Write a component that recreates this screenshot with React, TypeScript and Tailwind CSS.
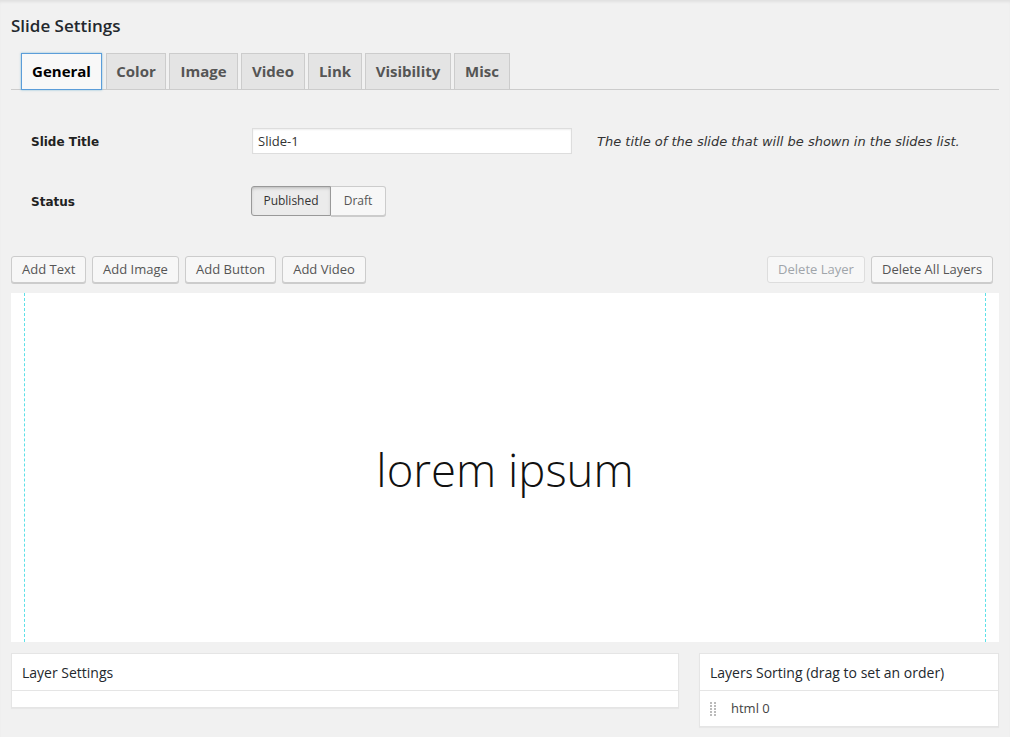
import React from "react";

const tabs = [
  { label: "General", w: "w-[81px]", active: true },
  { label: "Color", w: "w-[60px]" },
  { label: "Image", w: "w-[69px]" },
  { label: "Video", w: "w-[64px]" },
  { label: "Link", w: "w-[54px]" },
  { label: "Visibility", w: "w-[86px]" },
  { label: "Misc", w: "w-[56px]" },
];

function WpButton({ children, disabled, className = "" }: { children: React.ReactNode; disabled?: boolean; className?: string }) {
  return (
    <button
      className={
        "h-[27px] px-[10px] rounded-[3px] border text-[13px] leading-[25px] whitespace-nowrap " +
        (disabled
          ? "border-[#ddd] bg-[#f7f7f7] text-[#a0a5aa] shadow-none "
          : "border-[#ccc] bg-[#f7f7f7] text-[#555] shadow-[0_1px_0_#ccc] ") +
        className
      }
    >
      {children}
    </button>
  );
}

function Handle() {
  return (
    <svg width="6" height="14" viewBox="0 0 6 14" className="shrink-0">
      {[0, 1, 2, 3, 4].map((r) =>
        [0, 1].map((c) => (
          <rect key={r + "-" + c} x={c * 4} y={r * 3} width="2" height="2" fill="#bbb" />
        ))
      )}
    </svg>
  );
}

export default function App() {
  return (
    <div
      className="w-[1010px] h-[737px] overflow-hidden bg-[#f1f1f1] text-[#444] shadow-[inset_0_3px_3px_-1px_rgba(0,0,0,0.07)]"
      style={{ fontFamily: '"Open Sans", sans-serif' }}
    >
      <div className="px-[11px]">
        <h2 className="pt-[14px] text-[17px] leading-[23px] font-semibold text-[#23282d]">Slide Settings</h2>

        {/* Tabs */}
        <div className="mt-[15px] flex gap-[3px] pl-[10px] pt-px border-b border-[#ccc] w-[988px]">
          {tabs.map((t) => (
            <div
              key={t.label}
              className={
                "h-[37px] -mb-px flex items-center justify-center text-[15px] font-bold border " +
                t.w +
                " " +
                (t.active
                  ? "bg-[#f8f8f8] border-[#5b9dd9] text-black shadow-[0_0_2px_rgba(30,140,190,0.5)] mr-px"
                  : "bg-[#e4e4e4] border-[#ccc] text-[#555]")
              }
            >
              <span>{t.label}</span>
            </div>
          ))}
        </div>

        {/* Form */}
        <div className="mt-[38px] flex items-center h-[26px]">
          <div className="w-[241px] pl-[20px] font-bold text-[#222]" style={{ fontFamily: '"DejaVu Sans", sans-serif', fontSize: "12px" }}>
            <span className="relative top-px">Slide Title</span>
          </div>
          <div className="w-[320px] h-[26px] bg-white border border-[#ddd] shadow-[inset_0_1px_2px_rgba(0,0,0,0.07)] px-[5px] text-[13px] leading-[24px] text-[#333]">
            Slide-1
          </div>
          <div className="ml-[25px] italic text-[#333]" style={{ fontFamily: '"DejaVu Sans", sans-serif', fontSize: "13px" }}>
            <span className="relative top-px">The title of the slide that will be shown in the slides list.</span>
          </div>
        </div>

        <div className="mt-[32px] flex items-center h-[30px]">
          <div className="w-[240px] pl-[20px] font-bold text-[#222]" style={{ fontFamily: '"DejaVu Sans", sans-serif', fontSize: "12px" }}>
            <span className="relative top-px">Status</span>
          </div>
          <div className="flex h-[30px] text-[12px]">
            <div className="w-[80px] flex items-center justify-center bg-[#ebebeb] border border-[#999] rounded-l-[3px] shadow-[inset_0_2px_5px_-3px_rgba(0,0,0,0.5)] text-[#333]">
              Published
            </div>
            <div className="w-[55px] flex items-center justify-center bg-[#f7f7f7] border border-l-0 border-[#ccc] rounded-r-[3px] shadow-[0_1px_0_#ccc] text-[#555]">
              Draft
            </div>
          </div>
        </div>

        {/* Layer buttons */}
        <div className="mt-[40px] flex items-center">
          <div className="flex gap-[6px]">
            <WpButton className="w-[75px]">Add Text</WpButton>
            <WpButton className="w-[87px]">Add Image</WpButton>
            <WpButton className="w-[91px]">Add Button</WpButton>
            <WpButton className="w-[84px]">Add Video</WpButton>
          </div>
          <div className="ml-auto mr-[6px] flex gap-[6px]">
            <WpButton disabled className="w-[98px]">Delete Layer</WpButton>
            <WpButton className="w-[122px]">Delete All Layers</WpButton>
          </div>
        </div>

        {/* Canvas */}
        <div className="mt-[10px] w-[988px] h-[349px] bg-white flex relative">
          <div className="absolute left-[13px] top-0 bottom-0 border-l border-dashed border-[#5ee1e8]" />
          <div className="absolute right-[13px] top-0 bottom-0 border-l border-dashed border-[#5ee1e8]" />
          <div className="flex-1 flex items-center justify-center">
            <span className="text-[45.5px] font-light text-[#111] leading-none mt-[4px]" style={{ fontFamily: '"Open Sans", sans-serif' }}>
              lorem ipsum
            </span>
          </div>
        </div>

        {/* Panels */}
        <div className="mt-[11px] flex items-start">
          <div className="w-[668px] bg-white border border-[#e5e5e5] shadow-[0_1px_1px_rgba(0,0,0,0.04)]">
            <div className="h-[37px] px-[10px] flex items-center text-[14px] text-[#23282d] border-b border-[#e5e5e5]">
              Layer Settings
            </div>
            <div className="h-[16px]" />
          </div>
          <div className="ml-[20px] w-[300px] bg-white border border-[#e5e5e5] shadow-[0_1px_1px_rgba(0,0,0,0.04)]">
            <div className="h-[37px] px-[10px] flex items-center text-[14px] text-[#23282d] border-b border-[#e5e5e5]">
              Layers Sorting (drag to set an order)
            </div>
            <div className="h-[35px] flex items-center pl-[10px] gap-[15px] text-[13px] text-[#444]">
              <Handle />
              <span>html 0</span>
            </div>
          </div>
        </div>
      </div>
    </div>
  );
}
